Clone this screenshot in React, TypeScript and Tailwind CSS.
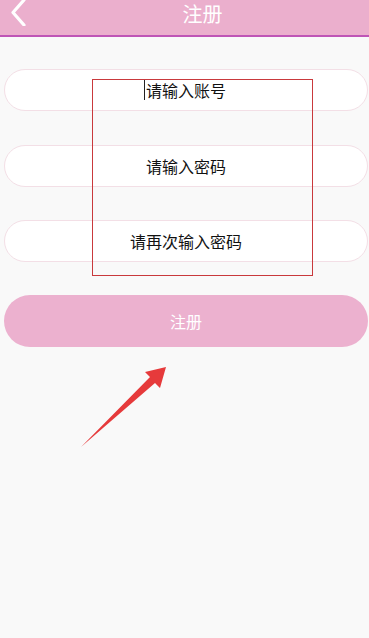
import React from "react";

const font = { fontFamily: '"Noto Sans CJK SC", "Liberation Sans", sans-serif' };

function Field({ placeholder, caret }: { placeholder: string; caret?: boolean }) {
  return (
    <div className="h-[42px] w-[364px] rounded-full bg-white border border-[#f3dfe6] flex items-center justify-center">
      <span className="relative text-[16px] leading-none text-[#111]">
        {caret && <span className="absolute -left-[2px] -top-[3px] h-[21px] w-px bg-[#222]" />}
        {placeholder}
      </span>
    </div>
  );
}

export default function App() {
  return (
    <div className="relative h-[638px] w-[369px] overflow-hidden bg-[#f9f9f9]" style={font}>
      {/* Header */}
      <div className="relative h-[37px] bg-[#ebafcd] border-b-2 border-[#bf55b6] flex items-center justify-center">
        <svg className="absolute left-[9px] top-0" width="18" height="26" viewBox="0 0 18 26">
          <path d="M15 0 L4 12.5 L15 25" fill="none" stroke="white" strokeWidth="3.2" strokeLinecap="round" strokeLinejoin="round" />
        </svg>
        <span className="pl-[36px] pb-[8px] text-[20px] leading-none text-white">注册</span>
      </div>

      {/* Form */}
      <div className="flex flex-col pl-[4px] pt-[32px]">
        <Field placeholder="请输入账号" caret />
        <div className="h-[34px]" />
        <Field placeholder="请输入密码" />
        <div className="h-[33px]" />
        <Field placeholder="请再次输入密码" />
        <div className="h-[33px]" />
        <button className="h-[52px] w-[364px] rounded-full bg-[#ecb1cf] text-white text-[16px]">注册</button>
      </div>

      {/* Annotation box */}
      <div className="absolute left-[92px] top-[79px] h-[197px] w-[221px] border border-[#c9393c]" />

      {/* Annotation arrow */}
      <svg className="absolute left-0 top-0" width="369" height="638" viewBox="0 0 369 638">
        <polygon points="81,447 150,377 145,372 166,367 160,388 155,383" fill="#e63a3b" />
      </svg>
    </div>
  );
}
